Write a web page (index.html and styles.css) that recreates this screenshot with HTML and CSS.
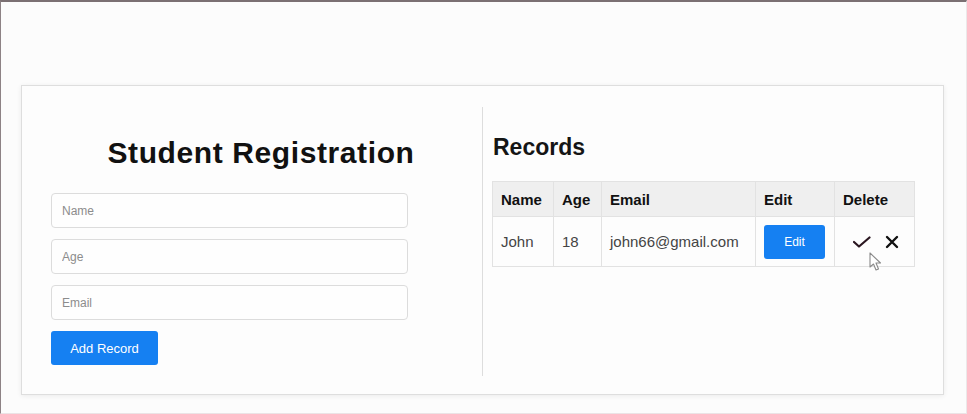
FILE: index.html
```html
<!DOCTYPE html>
<html>
<head>
<meta charset="utf-8">
<link rel="stylesheet" href="styles.css">
</head>
<body>
<div class="screen">
  <div class="card">
    <section class="form-col">
      <h1 class="title">Student Registration</h1>
      <input class="field" type="text" placeholder="Name">
      <input class="field" type="text" placeholder="Age">
      <input class="field" type="text" placeholder="Email">
      <button class="btn add-btn">Add Record</button>
    </section>
    <section class="records-col">
      <h2 class="records-title">Records</h2>
      <table class="records">
        <colgroup>
          <col class="c-name"><col class="c-age"><col class="c-email"><col class="c-edit"><col class="c-del">
        </colgroup>
        <thead>
          <tr><th>Name</th><th>Age</th><th>Email</th><th>Edit</th><th>Delete</th></tr>
        </thead>
        <tbody>
          <tr>
            <td>John</td>
            <td>18</td>
            <td>john66@gmail.com</td>
            <td><button class="btn edit-btn">Edit</button></td>
            <td class="del-cell">
              <div class="actions">
                <svg class="ic-check" width="18" height="12" viewBox="0 0 18 12"><polyline points="1,6 6,10.5 16.5,1.5" fill="none" stroke="#2a1620" stroke-width="2.2" stroke-linecap="round" stroke-linejoin="round"/></svg>
                <svg class="ic-x" width="14" height="14" viewBox="0 0 14 14"><path d="M2 2 L12 12 M12 2 L2 12" stroke="#111" stroke-width="2.4" stroke-linecap="round"/></svg>
              </div>
              <svg class="cursor" width="13" height="20" viewBox="0 0 13 20"><path d="M1 1 L1 15 L4.5 12 L7 18 L9.5 17 L7 11 L11.5 11 Z" fill="#fff" stroke="#8a8a8a" stroke-width="1.1" stroke-linejoin="round"/></svg>
            </td>
          </tr>
        </tbody>
      </table>
    </section>
  </div>
</div>
</body>
</html>
```
FILE: styles.css
```css
html, body {
  margin: 0;
  padding: 0;
  background: #fcfcfc;
  font-family: "Liberation Sans", Arial, sans-serif;
}

.screen {
  box-sizing: border-box;
  width: 967px;
  height: 414px;
  overflow: hidden;
  border-top: 2px solid #7b7073;
  border-left: 1px solid #8d8285;
  border-right: 1px solid #ece8e9;
  border-bottom: 1px solid #ebe3e5;
  padding-top: 83px;
  background: #fcfcfc;
}

.card {
  box-sizing: border-box;
  margin-left: 20px;
  width: 923px;
  height: 310px;
  border: 1px solid #dedede;
  background: #fdfdfd;
  box-shadow: 0 1px 5px rgba(0, 0, 0, 0.07);
  display: flex;
  padding: 21px 0 18px;
}

.form-col {
  box-sizing: border-box;
  width: 460px;
  padding: 0 11px 0 29px;
  display: flex;
  flex-direction: column;
  align-items: flex-start;
}

.title {
  align-self: stretch;
  margin: 30px 0 24px;
  text-align: center;
  font-size: 30px;
  line-height: 32px;
  letter-spacing: 0.6px;
  font-weight: bold;
  color: #111;
}

.field {
  box-sizing: border-box;
  width: 357px;
  height: 35px;
  margin: 0 0 11px;
  padding: 0 10px;
  border: 1px solid #dcdcdc;
  border-radius: 4px;
  background: #fefefe;
  font-family: "Liberation Sans", Arial, sans-serif;
  font-size: 12px;
  color: #333;
  outline: none;
}

.field::placeholder {
  color: #8c8c8c;
}

.btn {
  border: none;
  background: #1580f2;
  color: #fff;
  font-family: "Liberation Sans", Arial, sans-serif;
  border-radius: 3px;
  cursor: pointer;
}

.add-btn {
  width: 107px;
  height: 34px;
  font-size: 13px;
  margin-top: 0;
}

.records-col {
  box-sizing: border-box;
  flex: 1;
  border-left: 1px solid #dddddd;
  padding-left: 9px;
}

.records-title {
  margin: 27px 0 21px 1px;
  font-size: 23px;
  line-height: 26px;
  font-weight: bold;
  color: #151515;
}

.records {
  border-collapse: collapse;
  table-layout: fixed;
  width: 422px;
  font-size: 15px;
}

.c-name { width: 61px; }
.c-age { width: 48px; }
.c-email { width: 154px; }
.c-edit { width: 79px; }
.c-del { width: 80px; }

.records th,
.records td {
  border: 1px solid #e2e2e2;
  text-align: left;
  padding: 0 8px;
  white-space: nowrap;
}

.records th {
  height: 34px;
  background: #efefef;
  color: #111;
  font-weight: bold;
}

.records td {
  height: 49px;
  color: #444;
  background: #fdfdfd;
}

.edit-btn {
  width: 61px;
  height: 34px;
  font-size: 12px;
  display: block;
}

.del-cell {
  position: relative;
}

.actions {
  display: flex;
  justify-content: center;
  align-items: center;
  gap: 14px;
  padding-left: 2px;
}

.ic-check { display: block; }
.ic-x { display: block; }

.cursor {
  position: absolute;
  left: 34px;
  top: 35px;
}
```
